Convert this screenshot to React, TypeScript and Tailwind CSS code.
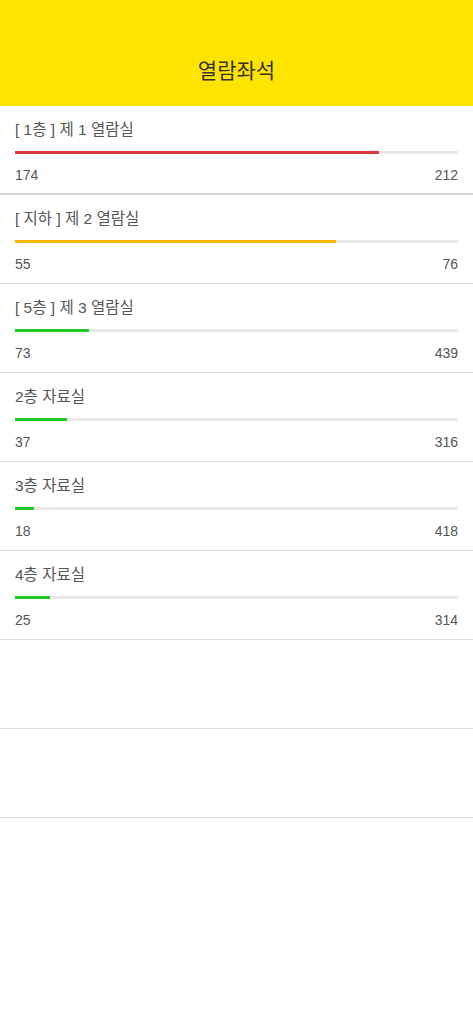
const rooms = [
  { name: "[ 1층 ] 제 1 열람실", used: 174, total: 212, color: "bg-[#d9363e]" },
  { name: "[ 지하 ] 제 2 열람실", used: 55, total: 76, color: "bg-[#ffb400]" },
  { name: "[ 5층 ] 제 3 열람실", used: 73, total: 439, color: "bg-[#22c91e]" },
  { name: "2층 자료실", used: 37, total: 316, color: "bg-[#22c91e]" },
  { name: "3층 자료실", used: 18, total: 418, color: "bg-[#22c91e]" },
  { name: "4층 자료실", used: 25, total: 314, color: "bg-[#22c91e]" },
];

function RoomRow({
  name,
  used,
  total,
  color,
  first,
}: {
  name: string;
  used: number;
  total: number;
  color: string;
  first: boolean;
}) {
  const pct = (used / total) * 100;
  return (
    <li
      className={`flex h-[89px] flex-col px-[15px] pt-[14px] ${
        first ? "border-b-2 border-[#d6d6da]" : "border-b border-[#dcdcdc]"
      }`}
    >
      <p className="h-5 text-[15.5px] leading-5 text-[#555]">{name}</p>
      <div className="mt-[11px] h-[3px] w-full bg-[#e8e8e8]">
        <div className={`h-full ${color}`} style={{ width: `${pct}%` }} />
      </div>
      <div className="mt-[11px] flex justify-between text-[14px] leading-5 text-[#555]">
        <span>{used}</span>
        <span>{total}</span>
      </div>
    </li>
  );
}

export default function App() {
  return (
    <div
      className="min-h-screen bg-white"
      style={{ fontFamily: '"Liberation Sans", "Noto Sans CJK KR", sans-serif' }}
    >
      <header className="flex h-[106px] items-end justify-center bg-[#ffe400] pb-[21px]">
        <h1 className="text-[21px] leading-7 text-[#333]">열람좌석</h1>
      </header>
      <ul>
        {rooms.map((room, i) => (
          <RoomRow key={room.name} {...room} first={i === 0} />
        ))}
        <li className="h-[89px] border-b border-[#dcdcdc]" />
        <li className="h-[89px] border-b border-[#dcdcdc]" />
      </ul>
    </div>
  );
}
